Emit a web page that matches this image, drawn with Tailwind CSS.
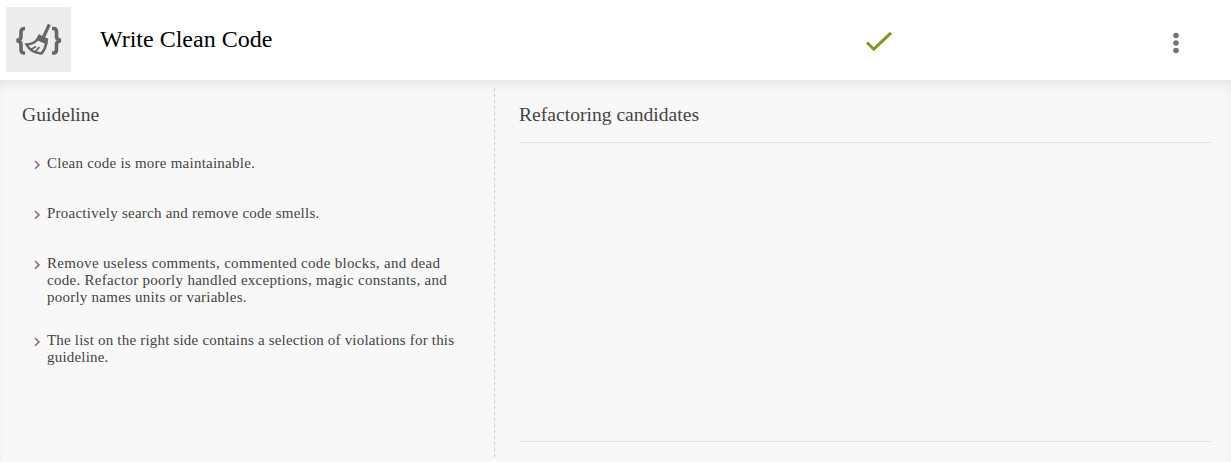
<!DOCTYPE html>
<html lang="en">
<head>
<meta charset="utf-8">
<title>Write Clean Code</title>
<script src="https://cdn.jsdelivr.net/npm/@tailwindcss/browser@4"></script>
</head>
<body class="flex h-screen flex-col overflow-hidden bg-white font-['Liberation_Serif','Times_New_Roman',serif]">
<header class="flex h-20 shrink-0 items-start">
  <div class="ml-1.5 mt-[7px] size-[65px] shrink-0 bg-[#ededed]">
    <svg class="size-full" viewBox="0 0 65 65" fill="none" stroke="#666" stroke-width="3.200">
      <path d="M19 21.500h-1q-3 0-3 3.500v4.500q0 3.500-4.500 4q4.500 .5 4.500 4v5q0 3.500 3 3.500h1M46 21.500h1.500q3 0 3 3.500v4.500q0 3.500 4.500 4q-4.500 .5-4.500 4v5q0 3.500-3 3.500h-1.500" stroke-width="3.600"/>
      <path d="M43.300 17.500L37.500 30"/>
      <path d="M33 28L41.500 32L41 37L30.500 32.500Z" fill="#666" stroke-width="1.200"/>
      <path d="M31.500 32.500Q27 37.500 20.500 37.500Q24.500 45.500 35.500 46.500Q39.500 42 40 36.500" stroke-width="2.600"/>
      <path d="M25 42.500l5-3M29.500 44.500l4-4.500" stroke-width="1.800"/>
    </svg>
  </div>
  <h1 class="ml-[29px] mt-[23px] w-[760px] text-[24px] leading-8 text-black">Write Clean Code</h1>
  <svg class="mt-[25px] ml-1 h-8 w-8" viewBox="0 0 32 32"><path d="M3 17.500L9.800 24.200L27 7.800" fill="none" stroke="#7c9a1c" stroke-width="3"/></svg>
  <svg class="ml-[274px] mt-[31px] h-6 w-3" viewBox="0 0 12 24" fill="#757575"><circle cx="6" cy="4.500" r="2.800"/><circle cx="6" cy="12" r="2.800"/><circle cx="6" cy="19.500" r="2.800"/></svg>
</header>
<main class="flex min-h-0 flex-1 bg-[#f8f8f8] pt-2 text-[#444] shadow-[inset_0_11px_14px_-8px_rgba(0,0,0,0.09),inset_8px_0_8px_-8px_rgba(0,0,0,0.03),inset_-8px_0_8px_-8px_rgba(0,0,0,0.03)]">
  <section class="w-[494px] shrink-0 pl-[22px] pt-[15px]">
    <h2 class="text-[19.600px] leading-6">Guideline</h2>
    <ul class="mt-7 ml-[11px] flex w-[440px] flex-col text-[15px] leading-[17px] tracking-[0.24px]">
      <li class="flex h-[50px]"><svg class="mr-1.5 mt-1 h-3 w-2 shrink-0" viewBox="0 0 8 12"><path d="M2 2L6 5.900L2 9.800" fill="none" stroke="#9b647d" stroke-width="1.600"/></svg><p>Clean code is more maintainable.</p></li>
      <li class="flex h-[50px]"><svg class="mr-1.5 mt-1 h-3 w-2 shrink-0" viewBox="0 0 8 12"><path d="M2 2L6 5.900L2 9.800" fill="none" stroke="#9b647d" stroke-width="1.600"/></svg><p>Proactively search and remove code smells.</p></li>
      <li class="flex h-[77px]"><svg class="mr-1.5 mt-1 h-3 w-2 shrink-0" viewBox="0 0 8 12"><path d="M2 2L6 5.900L2 9.800" fill="none" stroke="#9b647d" stroke-width="1.600"/></svg><p><span class="tracking-[0.32px]">Remove useless comments, commented code blocks, and dead</span><br><span class="tracking-[0.285px]">code. Refactor poorly handled exceptions, magic constants, and</span><br>poorly names units or variables.</p></li>
      <li class="flex"><svg class="mr-1.5 mt-1 h-3 w-2 shrink-0" viewBox="0 0 8 12"><path d="M2 2L6 5.900L2 9.800" fill="none" stroke="#9b647d" stroke-width="1.600"/></svg><p class="tracking-[0.2px]">The list on the right side contains a selection of violations for this<br>guideline.</p></li>
    </ul>
  </section>
  <div class="mb-1 w-px shrink-0 bg-[repeating-linear-gradient(to_bottom,#c9c9c9_0_3px,transparent_3px_6px)]"></div>
  <section class="ml-6 mr-5 flex flex-1 flex-col pt-[15px] pb-5">
    <h2 class="text-[19.600px] leading-6">Refactoring candidates</h2>
    <div class="mt-[15px] flex-1 border-y border-[#dedede]"></div>
  </section>
</main>
</body>
</html>
